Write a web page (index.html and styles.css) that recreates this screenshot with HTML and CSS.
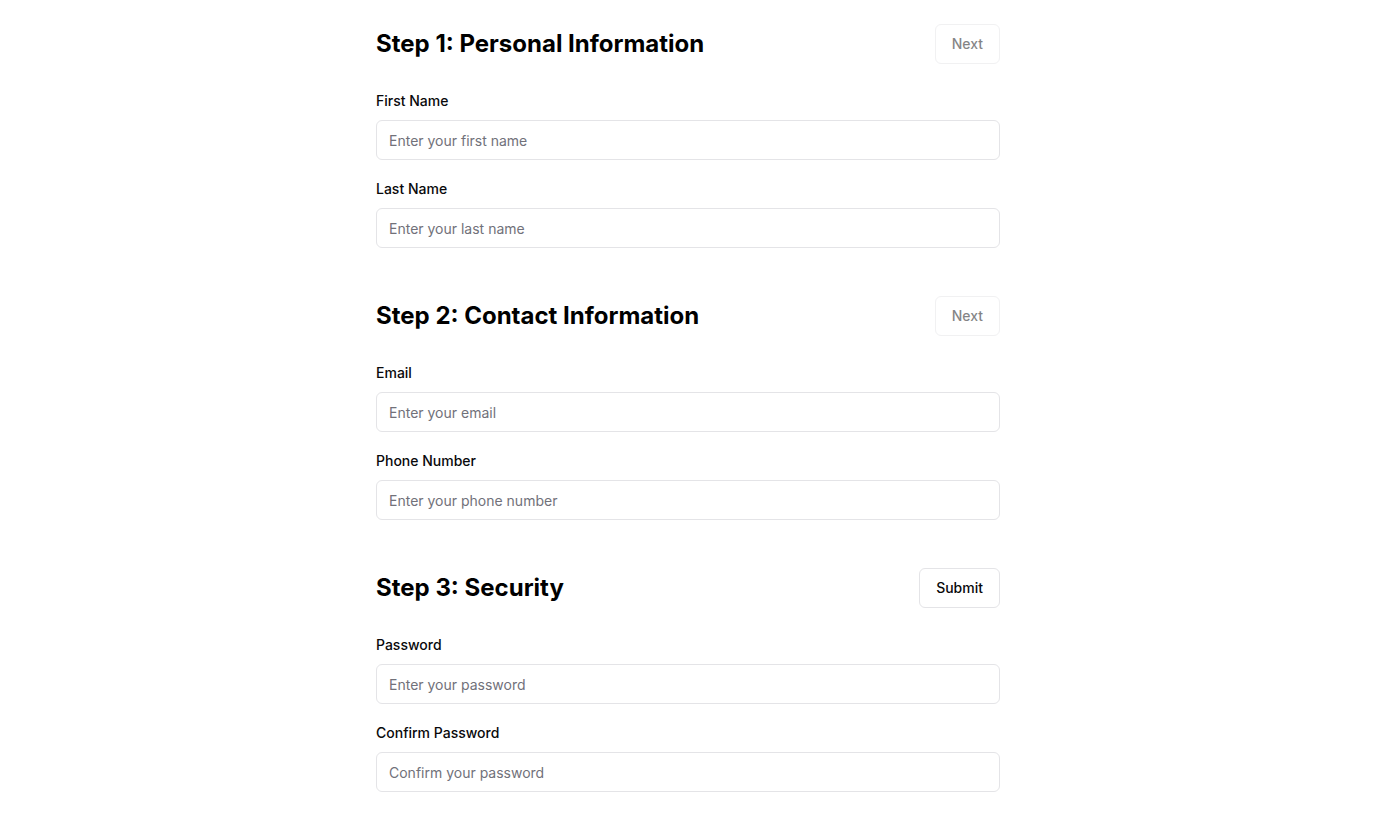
FILE: index.html
```html
<!DOCTYPE html>
<html lang="en">
<head>
<meta charset="utf-8">
<title>Multi-step form</title>
<link rel="stylesheet" href="styles.css">
</head>
<body>
<main class="form-wrap">
  <section class="step">
    <div class="step-head">
      <h2 class="step-title">Step 1: Personal Information</h2>
      <button class="btn btn-disabled" type="button">Next</button>
    </div>
    <div class="fields">
      <div class="field">
        <label class="label">First Name</label>
        <input class="input" type="text" placeholder="Enter your first name">
      </div>
      <div class="field">
        <label class="label">Last Name</label>
        <input class="input" type="text" placeholder="Enter your last name">
      </div>
    </div>
  </section>
  <section class="step">
    <div class="step-head">
      <h2 class="step-title">Step 2: Contact Information</h2>
      <button class="btn btn-disabled" type="button">Next</button>
    </div>
    <div class="fields">
      <div class="field">
        <label class="label">Email</label>
        <input class="input" type="email" placeholder="Enter your email">
      </div>
      <div class="field">
        <label class="label">Phone Number</label>
        <input class="input" type="tel" placeholder="Enter your phone number">
      </div>
    </div>
  </section>
  <section class="step">
    <div class="step-head">
      <h2 class="step-title">Step 3: Security</h2>
      <button class="btn" type="button">Submit</button>
    </div>
    <div class="fields">
      <div class="field">
        <label class="label">Password</label>
        <input class="input" type="password" placeholder="Enter your password">
      </div>
      <div class="field">
        <label class="label">Confirm Password</label>
        <input class="input" type="password" placeholder="Confirm your password">
      </div>
    </div>
  </section>
</main>
</body>
</html>
```
FILE: styles.css
```css
* { box-sizing: border-box; }
html, body { margin: 0; padding: 0; background: #ffffff; }
body {
  font-family: Inter, "Liberation Sans", sans-serif;
  color: #09090b;
}
.form-wrap {
  width: 624px;
  margin: 0 auto;
  padding-top: 24px;
  display: flex;
  flex-direction: column;
  gap: 48px;
}
.step { display: flex; flex-direction: column; }
.step-head {
  display: flex;
  align-items: center;
  justify-content: space-between;
  height: 40px;
  margin-bottom: 27px;
}
.step-title {
  margin: 0;
  font-size: 24px;
  line-height: 32px;
  font-weight: 700;
  color: #000;
}
.fields { display: flex; flex-direction: column; gap: 19px; }
.field { display: flex; flex-direction: column; }
.label {
  font-size: 14px;
  line-height: 20px;
  font-weight: 500;
  margin-bottom: 9px;
  color: #09090b;
}
.input {
  height: 40px;
  width: 100%;
  border: 1px solid #e4e4e7;
  border-radius: 6px;
  padding: 0 12px;
  font-family: inherit;
  font-size: 14px;
  color: #09090b;
  background: #fff;
  outline: none;
}
.input::placeholder { color: #71717a; }
.btn {
  height: 40px;
  padding: 0 16px 1px;
  border: 1px solid #e4e4e7;
  border-radius: 6px;
  background: #fff;
  font-family: inherit;
  font-size: 14px;
  font-weight: 500;
  color: #09090b;
  cursor: pointer;
}
.btn-disabled { opacity: 0.5; cursor: default; }
```
